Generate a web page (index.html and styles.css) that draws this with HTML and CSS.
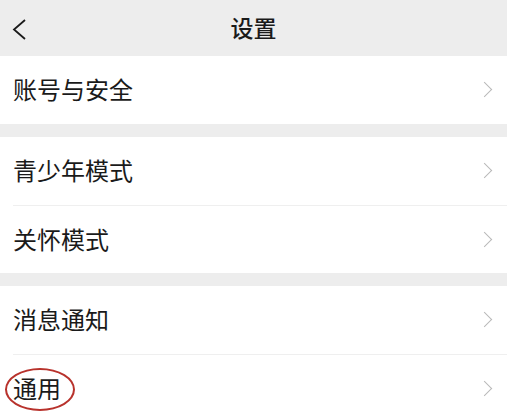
FILE: index.html
```html
<!DOCTYPE html>
<html lang="zh-CN">
<head>
    <meta charset="UTF-8">
    <meta name="viewport" content="width=device-width, initial-scale=1.0">
    <title>设置</title>
    <link rel="stylesheet" href="styles.css">
</head>
<body>
    <div class="header">
        <svg class="back" width="15" height="22" viewBox="0 0 15 22">
            <path d="M13 1 L2 10.5 L13 20" fill="none" stroke="#1a1a1a" stroke-width="1.8"/>
        </svg>
        <h1>设置</h1>
    </div>

    <div class="group">
        <div class="row"><span>账号与安全</span><i class="arrow"></i></div>
    </div>

    <div class="group">
        <div class="row"><span>青少年模式</span><i class="arrow"></i></div>
        <div class="row"><span>关怀模式</span><i class="arrow"></i></div>
    </div>

    <div class="group">
        <div class="row"><span>消息通知</span><i class="arrow"></i></div>
        <div class="row"><span class="marked">通用</span><i class="arrow"></i></div>
    </div>
</body>
</html>
```

FILE: styles.css
```css
body { margin: 0; background: #ededed; font-family: "Noto Sans CJK SC", "Noto Sans", sans-serif; color: #1a1a1a; overflow: hidden; }
.header { height: 56px; display: flex; align-items: center; justify-content: center; position: relative; padding-bottom: 2px; box-sizing: border-box; }
.back { position: absolute; left: 12px; top: 19px; }
h1 { margin: 0; font-size: 23px; font-weight: 500; }
.group { background: #fff; margin-bottom: 13px; }
.group:last-child { margin-bottom: 0; }
.row { height: 68px; margin-left: 13px; padding-right: 13px; padding-bottom: 3px; display: flex; align-items: center; justify-content: space-between; font-size: 24px; border-top: 1px solid #efefef; box-sizing: border-box; }
.row:first-child { border-top: none; }
.arrow { width: 10px; height: 10px; border-top: 1.5px solid #b8b8b8; border-right: 1.5px solid #b8b8b8; transform: rotate(45deg); margin-right: 4px; margin-top: 2px; }
.marked { position: relative; }
.marked::after { content: ""; position: absolute; left: -8px; top: -2px; width: 66px; height: 39px; border: 2px solid #b8322c; border-radius: 50%; }
```
